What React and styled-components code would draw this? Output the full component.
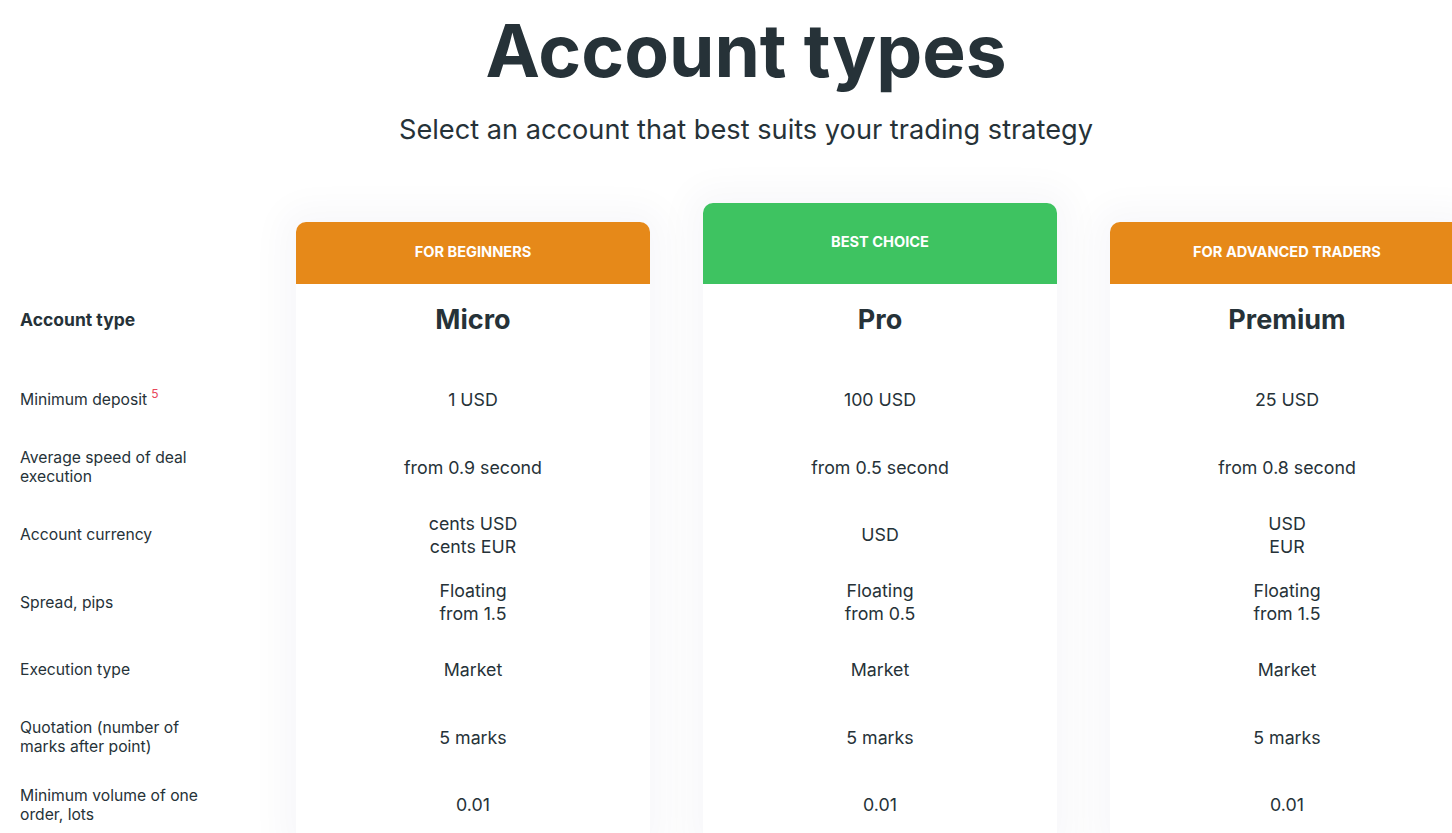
import React from "react";
import styled, { createGlobalStyle } from "styled-components";

const Global = createGlobalStyle`
  html, body { margin: 0; padding: 0; background: #ffffff; }
  body {
    font-family: Inter, "Noto Sans", "Liberation Sans", sans-serif;
    color: #263238;
    overflow: hidden;
    width: 1452px;
    height: 833px;
  }
  * { box-sizing: border-box; }
`;

const Page = styled.div`
  width: 1452px;
  height: 833px;
  overflow: hidden;
`;

const Hero = styled.header`
  display: flex;
  flex-direction: column;
  align-items: center;
  padding-top: 7px;
  padding-left: 40px;
`;

const Title = styled.h1`
  margin: 0;
  font-size: 73px;
  line-height: 88px;
  font-weight: 700;
  color: #263238;
`;

const Subtitle = styled.p`
  margin: 19px 0 0;
  font-size: 27.2px;
  line-height: 32px;
  font-weight: 400;
  color: #263238;
`;

const Table = styled.div`
  display: flex;
  align-items: flex-end;
  gap: 53px;
  margin-top: 57px;
  width: 1520px;
`;

const LabelColumn = styled.div`
  width: 243px;
  flex: none;
  padding-left: 20px;
  display: flex;
  flex-direction: column;
`;

const HeaderSpacer = styled.div`
  height: 62px;
`;

const Card = styled.div`
  width: 354px;
  flex: none;
  display: flex;
  flex-direction: column;
  background: #ffffff;
  border-radius: 10px 10px 0 0;
  box-shadow: 0 0 34px 16px rgba(20, 45, 90, 0.032);
`;

const CardHeader = styled.div`
  height: ${(p) => (p.$featured ? 81 : 62)}px;
  background: ${(p) => (p.$featured ? "#3ec361" : "#e68919")};
  border-radius: 10px 10px 0 0;
  color: #ffffff;
  font-size: 14.6px;
  font-weight: 700;
  text-transform: uppercase;
  display: flex;
  align-items: center;
  justify-content: center;
  padding-bottom: ${(p) => (p.$featured ? 4 : 2)}px;
`;

const NameRow = styled.div`
  height: 82px;
  padding-bottom: 12px;
  display: flex;
  align-items: center;
  justify-content: ${(p) => (p.$label ? "flex-start" : "center")};
  font-size: ${(p) => (p.$label ? 17.5 : 27)}px;
  font-weight: 700;
  color: #263238;
`;

const Row = styled.div`
  height: 67.5px;
  display: flex;
  flex-direction: column;
  justify-content: center;
  align-items: ${(p) => (p.$label ? "flex-start" : "center")};
  text-align: ${(p) => (p.$label ? "left" : "center")};
  font-size: ${(p) => (p.$label ? 15.7 : 17.8)}px;
  line-height: ${(p) => (p.$label ? 19 : 23)}px;
  color: #263238;
`;

const Sup = styled.sup`
  color: #e8475b;
  font-size: 12px;
  margin-left: 4px;
  vertical-align: 7px;
  line-height: 0;
`;

const labels = [
  <>Minimum deposit<Sup>5</Sup></>,
  <>Average speed of deal<br />execution</>,
  <>Account currency</>,
  <>Spread, pips</>,
  <>Execution type</>,
  <>Quotation (number of<br />marks after point)</>,
  <>Minimum volume of one<br />order, lots</>,
];

const accounts = [
  {
    tag: "For beginners",
    name: "Micro",
    values: [
      ["1 USD"],
      ["from 0.9 second"],
      ["cents USD", "cents EUR"],
      ["Floating", "from 1.5"],
      ["Market"],
      ["5 marks"],
      ["0.01"],
    ],
  },
  {
    tag: "Best choice",
    name: "Pro",
    featured: true,
    values: [
      ["100 USD"],
      ["from 0.5 second"],
      ["USD"],
      ["Floating", "from 0.5"],
      ["Market"],
      ["5 marks"],
      ["0.01"],
    ],
  },
  {
    tag: "For advanced traders",
    name: "Premium",
    values: [
      ["25 USD"],
      ["from 0.8 second"],
      ["USD", "EUR"],
      ["Floating", "from 1.5"],
      ["Market"],
      ["5 marks"],
      ["0.01"],
    ],
  },
];

export default function App() {
  return (
    <Page>
      <Global />
      <Hero>
        <Title>Account types</Title>
        <Subtitle>Select an account that best suits your trading strategy</Subtitle>
      </Hero>
      <Table>
        <LabelColumn>
          <HeaderSpacer />
          <NameRow $label>Account type</NameRow>
          {labels.map((l, i) => (
            <Row $label key={i}>
              <div>{l}</div>
            </Row>
          ))}
        </LabelColumn>
        {accounts.map((a) => (
          <Card key={a.name}>
            <CardHeader $featured={a.featured}>{a.tag}</CardHeader>
            <NameRow>{a.name}</NameRow>
            {a.values.map((v, i) => (
              <Row key={i}>
                {v.map((line) => (
                  <span key={line}>{line}</span>
                ))}
              </Row>
            ))}
          </Card>
        ))}
      </Table>
    </Page>
  );
}
